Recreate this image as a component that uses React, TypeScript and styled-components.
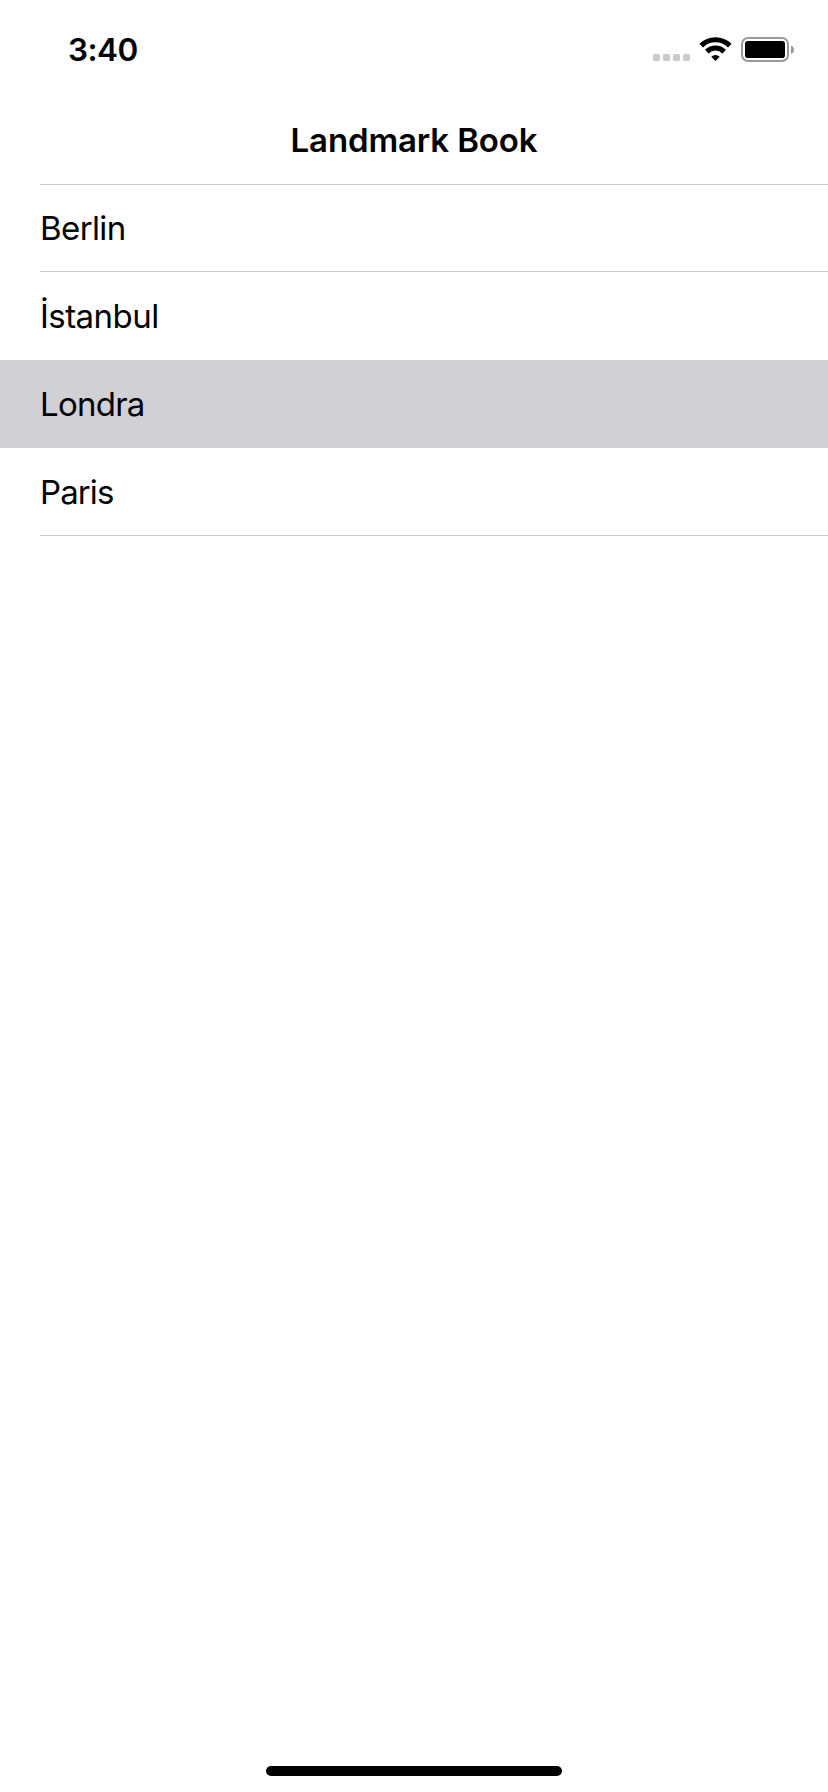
import React from "react";
import styled, { createGlobalStyle } from "styled-components";

const GlobalStyle = createGlobalStyle`
  *, *::before, *::after { box-sizing: border-box; }
  body {
    margin: 0;
    background: #fff;
    color: #000;
    font-family: Inter, "Liberation Sans", sans-serif;
    -webkit-font-smoothing: antialiased;
  }
`;

const Screen = styled.div`
  display: flex;
  flex-direction: column;
  width: 828px;
  height: 1792px;
  background: #fff;
  overflow: hidden;
`;

const StatusBar = styled.header`
  display: flex;
  justify-content: space-between;
  align-items: flex-start;
  height: 96px;
  padding: 29px 32px 0 68px;
`;

const Clock = styled.time`
  font-size: 31.5px;
  font-weight: 600;
  line-height: 42px;
  letter-spacing: -0.5px;
`;

const StatusIcons = styled.svg`
  display: block;
  width: 146px;
  height: 42px;
`;

const NavBar = styled.div`
  display: flex;
  justify-content: center;
  height: 88px;
  padding-top: 24px;
`;

const Title = styled.h1`
  margin: 0;
  font-size: 33px;
  font-weight: 600;
  line-height: 40px;
  letter-spacing: -0.12px;
`;

const List = styled.ul`
  margin: 0;
  padding: 0;
  list-style: none;
  background: linear-gradient(#c6c6c8, #c6c6c8) 40px 0 / 100% 1px no-repeat;
`;

const Row = styled.li<{ $selected?: boolean }>`
  display: flex;
  height: 88px;
  padding-left: 40px;
  background: ${({ $selected }) => ($selected ? "#d1d0d5" : "transparent")};
`;

const RowLabel = styled.span<{ $divider: boolean; $tracking: number }>`
  flex: 1;
  padding-top: 24px;
  font-size: 33px;
  line-height: 40px;
  letter-spacing: ${({ $tracking }) => $tracking}px;
  border-bottom: 1px solid ${({ $divider }) => ($divider ? "#c6c6c8" : "transparent")};
`;

const HomeArea = styled.footer`
  display: flex;
  justify-content: center;
  margin-top: auto;
  padding-bottom: 16px;
`;

const HomeIndicator = styled.div`
  width: 296px;
  height: 10px;
  border-radius: 5px;
  background: #000;
`;

const landmarks = [
  { name: "Berlin", divider: true, tracking: -0.6 },
  { name: "İstanbul", divider: false, tracking: -0.54 },
  { name: "Londra", divider: false, tracking: -0.75, selected: true },
  { name: "Paris", divider: true, tracking: -0.9 },
];

export default function App() {
  return (
    <>
      <GlobalStyle />
      <Screen>
        <StatusBar>
          <Clock>3:40</Clock>
          <StatusIcons viewBox="650 29 146 42" aria-hidden="true">
            <g fill="#cbcbcb">
              {[653, 663, 673, 683].map((x) => (
                <rect key={x} x={x} y="54" width="7" height="7" rx="1.6" />
              ))}
            </g>
            <g fill="none" stroke="#000" strokeWidth="5">
              <path d="M701.2 45.6a20.4 20.4 0 0 1 28.6 0" />
              <path d="M706.8 51.6a12.4 12.4 0 0 1 17.4 0" />
            </g>
            <path d="M715.5 61l-4.2-4.3a6.2 6.2 0 0 1 8.4 0z" />
            <rect x="742" y="38" width="46" height="23" rx="6" fill="none" stroke="#999" strokeWidth="2" />
            <rect x="745" y="41" width="40" height="17" rx="2.8" />
            <path d="M791 45.5c4 1.4 4 7.1 0 8.5z" fill="#999" />
          </StatusIcons>
        </StatusBar>
        <NavBar>
          <Title>Landmark Book</Title>
        </NavBar>
        <List>
          {landmarks.map((l) => (
            <Row key={l.name} $selected={l.selected}>
              <RowLabel $divider={l.divider} $tracking={l.tracking}>{l.name}</RowLabel>
            </Row>
          ))}
        </List>
        <HomeArea>
          <HomeIndicator />
        </HomeArea>
      </Screen>
    </>
  );
}
